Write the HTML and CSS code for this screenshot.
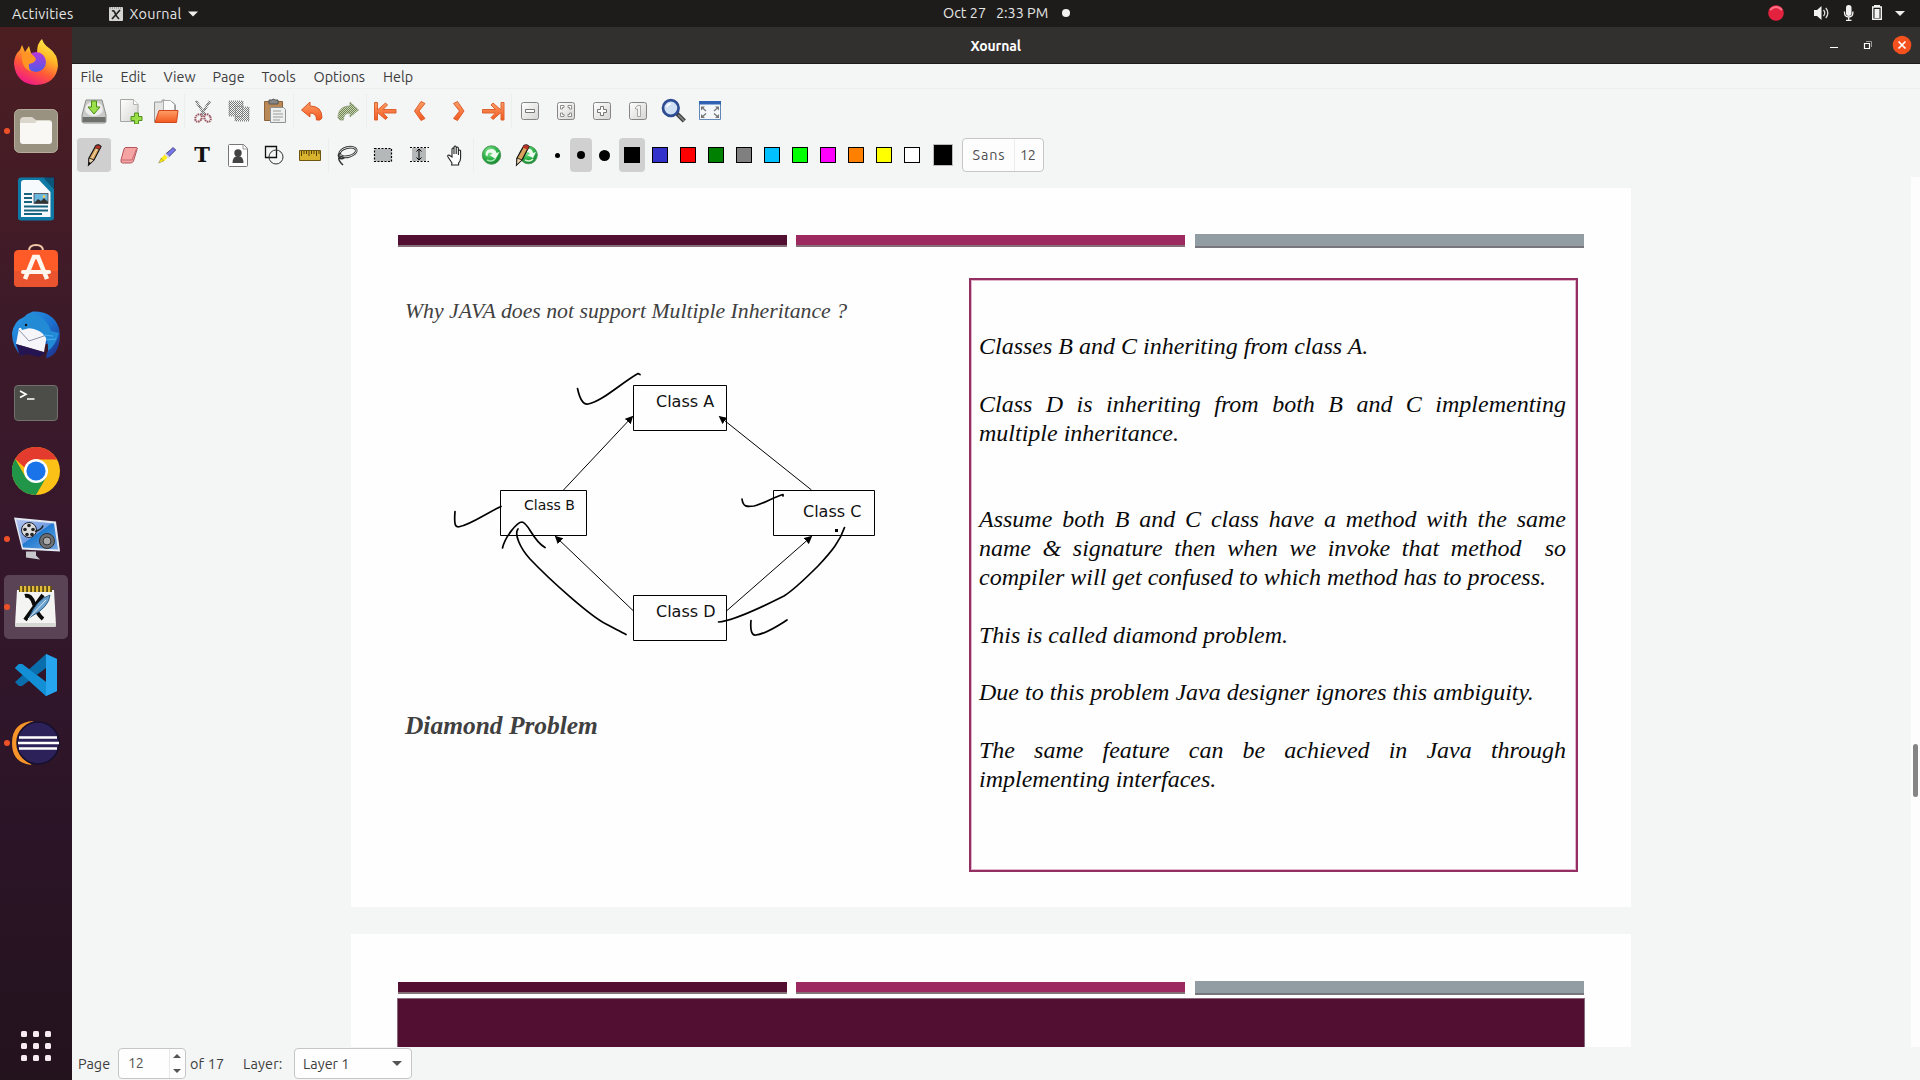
FILE: index.html
```html
<!DOCTYPE html>
<html lang="en">
<head>
<meta charset="utf-8">
<title>Xournal</title>
<link rel="stylesheet" href="styles.css">
</head>
<body>
<svg class="defs" width="0" height="0" aria-hidden="true">
  <defs>
    <linearGradient id="orange" x1="0" y1="0" x2="0" y2="1"><stop offset="0" stop-color="#ff9f68"/><stop offset="1" stop-color="#f2581f"/></linearGradient>
    <linearGradient id="paper" x1="0" y1="0" x2="1" y2="1"><stop offset="0" stop-color="#fff"/><stop offset="1" stop-color="#d4d4d2"/></linearGradient>
    <linearGradient id="fox" x1=".8" y1="0" x2=".3" y2="1"><stop offset="0" stop-color="#fff14d"/><stop offset=".35" stop-color="#ffb727"/><stop offset=".65" stop-color="#ff5a36"/><stop offset="1" stop-color="#f0168c"/></linearGradient>
    <linearGradient id="foxcore" x1="0" y1="0" x2="0" y2="1"><stop offset="0" stop-color="#b936d9"/><stop offset="1" stop-color="#4f5be8"/></linearGradient>
    <linearGradient id="bird" x1="0" y1="0" x2="1" y2="1"><stop offset="0" stop-color="#2b9fe8"/><stop offset=".55" stop-color="#1c6fce"/><stop offset="1" stop-color="#1d2a86"/></linearGradient>
    <linearGradient id="screen" x1="0" y1="0" x2="1" y2="1"><stop offset="0" stop-color="#b6c7f0"/><stop offset=".48" stop-color="#6f9be0"/><stop offset=".5" stop-color="#1f7bd0"/><stop offset="1" stop-color="#78a8e4"/></linearGradient>
    <radialGradient id="leaf" cx=".4" cy=".3" r=".8"><stop offset="0" stop-color="#8ee89a"/><stop offset=".5" stop-color="#2fb54a"/><stop offset="1" stop-color="#0a7a28"/></radialGradient>
    <pattern id="dither" width="2" height="2" patternUnits="userSpaceOnUse"><rect width="1" height="1" fill="#777"/><rect x="1" y="1" width="1" height="1" fill="#777"/></pattern>
    <pattern id="ditherGreen" width="2" height="2" patternUnits="userSpaceOnUse"><rect width="2" height="2" fill="#c9d6b4"/><rect width="1" height="1" fill="#708553"/><rect x="1" y="1" width="1" height="1" fill="#708553"/></pattern>
    <marker id="arrow" viewBox="0 0 8 8" refX="7" refY="4" markerWidth="8" markerHeight="8" markerUnits="userSpaceOnUse" orient="auto"><path d="M0 0L8 4L0 8z"/></marker>
  </defs>
</svg>

<header class="topbar">
  <div class="topbar-left">
    <span>Activities</span>
    <span class="app-menu">
      <svg width="14" height="14" viewBox="0 0 14 14"><rect width="14" height="14" rx="1" fill="#d4d4d2"/><path d="M1 1h12" stroke="#777" stroke-dasharray="1 1"/><path d="M3 4q2-1 3 2t4 6M11 3L3 12" stroke="#222" stroke-width="1.700" fill="none"/></svg>
      <span>Xournal</span>
      <svg width="10" height="6" viewBox="0 0 10 6"><path d="M0 .5h10L5 5.500z" fill="#eee"/></svg>
    </span>
  </div>
  <div class="topbar-clock"><span>Oct 27&nbsp;&nbsp; 2:33 PM</span><i class="dot"></i></div>
  <div class="topbar-right">
    <svg width="154" height="27" viewBox="1760 0 154 27">
      <circle cx="1776" cy="13" r="7.800" fill="#e2223f"/><path d="M1770 10q6-6 12 0" fill="none" stroke="#ff7185" stroke-width="2"/>
      <path d="M1814 10h3l4.500-4v14l-4.500-4h-3z" fill="#f2f2f2"/>
      <path d="M1823.500 10q2.500 3 0 6M1825.800 8q4 5 0 10" fill="none" stroke="#ddd" stroke-width="1.300"/>
      <rect x="1846" y="5" width="5.500" height="11" rx="2.700" fill="#f2f2f2"/><path d="M1844.500 11.500v1q0 4.500 4.200 4.500t4.200-4.500v-1M1848.700 17v3M1846 20.300h5.500" fill="none" stroke="#f2f2f2" stroke-width="1.300"/>
      <path d="M1872.700 7h8.600v12.300h-8.600z" fill="none" stroke="#f2f2f2" stroke-width="1.400"/><path d="M1874 5h6v2h-6zM1874.500 9h5v9h-5z" fill="#f2f2f2"/>
      <path d="M1895 11h10l-5 5z" fill="#eee"/>
    </svg>
  </div>
</header>

<div class="desktop">
  <nav class="dock">
    <div class="dock-item"><svg viewBox="0 1 48 48"><path d="M2 26Q2 17 8 12l2-5 3 7 4-6 2 7 6 0Q25 5 30 1q2 6 7 9 9 6 9 18 -2 18-22 19Q4 46 2 26z" fill="url(#fox)"/><circle cx="24" cy="24" r="10" fill="url(#foxcore)"/><path d="M10 14q10-1 14 7-1 4-7 5-1 5 3 8-9-3-10-12z" fill="#ff9524"/></svg></div>
    <div class="dock-item running"><svg viewBox="0 0 48 48"><rect x="2.500" y="2.500" width="43" height="43" rx="5" fill="#999280" stroke="#b4ad9c"/><path d="M8 14q0-4 4-4h8l4 3h13q3 0 3 3v6H8z" fill="#dcd7cc"/><path d="M8 16h15l2-2h12q3 0 3 3v17q0 3-3 3H11q-3 0-3-3z" fill="#f9f8f4"/></svg></div>
    <div class="dock-item"><svg viewBox="0 0 48 48"><path d="M9 2.500h23l9 0q1 0 1 1v39q0 3-3 3H9q-3 0-3-3v-37q0-3 3-3z" fill="#0e79a5"/><path d="M33 1.500h10v13z" fill="#35182c"/><path d="M12 5h15l11.500 12v25H9V8q0-3 3-3z" fill="#f7fafc"/><path d="M31 2.500h11v12z" fill="#0b5678"/><path d="M12 19h8M12 23h8M12 27h8M12 31.500h24M12 35.500h24M12 39h18" stroke="#17627f" stroke-width="1.800"/><rect x="22" y="18.500" width="14" height="10" fill="#69b7df" stroke="#333" stroke-width=".7"/><path d="M22 28l4-4 3 2 3-3 4 4v1.500z" fill="#333"/><circle cx="32" cy="21.500" r="1.300" fill="#ffd14a"/></svg></div>
    <div class="dock-item"><svg viewBox="0 1 48 48"><path d="M17 9q0-6 7-6t7 6" fill="none" stroke="#f2c7a6" stroke-width="2"/><rect x="2" y="8" width="44" height="37" rx="4.500" fill="#ff5b28"/><path d="M2 29h44v12q0 4-4 4H6q-4 0-4-4z" fill="#e9532d"/><path d="M13 37l9-22h4l9 22" fill="none" stroke="#fff6ee" stroke-width="4.500"/><path d="M11 30h26" stroke="#fff6ee" stroke-width="4" stroke-linecap="round"/></svg></div>
    <div class="dock-item"><svg viewBox="0 0 48 48"><path d="M0 22Q2 10 12 6q4-4 9-5.500Q41 0 47 17q3 14-4 25-5 5-9 5l1-5 5-9H8l2 12Q0 37 0 22z" fill="url(#bird)"/><path d="M7 17l17-1 11 8-3 17-28-8z" fill="#f5f5fa"/><path d="M7 19l10 11 18-6" fill="none" stroke="#8d93a5"/><path d="M9 17Q9 7 19 2q15 3 20 18l8 2q-3 12-11 18 1-15-9-20-8-4-13-2l-4 1z" fill="#238bd5"/><path d="M31 24l10 1M34 29l10-1" stroke="#4aaef0" fill="none"/><path d="M4 33l30 9-7 4-12-3-7 2z" fill="#241452"/><circle cx="14" cy="14" r="1.200" fill="#111"/></svg></div>
    <div class="dock-item"><svg viewBox="0 0 48 48"><rect x="2.500" y="6.500" width="43" height="35" rx="3.500" fill="#4c4c49" stroke="#70706c"/><path d="M8 12l6 3.300-6 3.300M15 20h7.500" fill="none" stroke="#fff" stroke-width="1.700"/></svg></div>
    <div class="dock-item"><svg viewBox="0 0 48 48"><circle cx="24" cy="24" r="24" fill="#fbc116"/><path d="M3.200 12A24 24 0 0 1 44.800 12H24L12 20z" fill="#e33b2e"/><path d="M3.200 12A24 24 0 0 0 24 48L34.400 30 24 36 13.600 30z" fill="#229648"/><path d="M24 12h20.800" stroke="#e33b2e"/><circle cx="24" cy="24" r="12" fill="#fff"/><circle cx="24" cy="24" r="9.600" fill="#1a73e8"/></svg></div>
    <div class="dock-item running"><svg viewBox="0 -1.500 48 48"><path d="M2 1l42 4 4 30-38-2z" fill="#e5eaf2"/><path d="M4 3l38 4 4 26-35-2z" fill="url(#screen)"/><path d="M14 35h10v4l4 4-14-2z" fill="#c8c8cc"/><circle cx="17" cy="13.500" r="7.500" fill="#ddd" stroke="#223"/><g fill="#222"><circle cx="17" cy="9" r="1.800"/><circle cx="13" cy="13" r="1.800"/><circle cx="21" cy="13" r="1.800"/><circle cx="15" cy="18" r="1.800"/><circle cx="20" cy="18" r="1.800"/></g><path d="M23 15q7-2 8-6" fill="none" stroke="#222" stroke-width="1.500"/><circle cx="35" cy="24.500" r="7.500" fill="#6c6f74" stroke="#333"/><circle cx="35" cy="24.500" r="4" fill="#aaa" stroke="#333"/></svg></div>
    <div class="dock-item running active"><svg viewBox="0 1 48 48"><path d="M5 8h37l2 35q0 2-2 2H5q-2 0-2-2z" fill="#f4f4f2"/><path d="M3 41h41v3q0 1-2 1H5q-2 0-2-1z" fill="#d6d6d3"/><rect x="7" y="4" width="33" height="6" fill="#5c4a15"/><path d="M8 7h32" stroke="#e2bd3d" stroke-width="6" stroke-dasharray="2.200 1.800"/><path d="M13 14q6-2 9 8t9 15M31 13L13 38" fill="none" stroke="#0c0c0c" stroke-width="4"/><path d="M17 36q8-19 21-23-1 12-18 21z" fill="#6da3cf" stroke="#2f5f8c"/><path d="M16 37L34 18" stroke="#dceaf5"/></svg></div>
    <div class="dock-item"><svg viewBox="0 0 48 48"><path d="M34 3l11 5v32l-11 5L3 17l4-4 3 0 24 18z" fill="#1587c9"/><path d="M34 3L3 31l4 4h3l24-18z" fill="#0a6dac"/><path d="M34 3l11 5v32l-11 5z" fill="#26a5ee"/><path d="M3 17l4-4h3l24 18v14z" fill="#138fd5"/></svg></div>
    <div class="dock-item running"><svg viewBox="0 0 48 48"><path d="M22 2Q0 3 0 24t21 22Q6 40 6 24T22 2z" fill="#f7942a"/><circle cx="26" cy="24" r="21" fill="#2c2158" stroke="#17102f" stroke-width="1.500"/><path d="M7 18.500h38M6 24h41M7 29.500h38" stroke="#fff" stroke-width="2.700"/></svg></div>
    <div class="apps-grid"><i></i><i></i><i></i><i></i><i></i><i></i><i></i><i></i><i></i></div>
  </nav>

  <main class="window">
    <div class="titlebar">
      <h1>Xournal</h1>
      <div class="window-buttons">
        <svg width="90" height="37" viewBox="1825 27 90 37"><path d="M1830 47.500h8" stroke="#fff"/><path d="M1864.500 43.500h5v5h-5z" fill="none" stroke="#fff" stroke-width="1.200"/><path d="M1866 41.500h5.500v5.500" fill="none" stroke="#999"/><circle cx="1902" cy="45" r="9.300" fill="#f4511e"/><path d="M1898.500 41.500l7 7m0-7l-7 7" stroke="#fff" stroke-width="1.700"/></svg>
      </div>
    </div>
    <div class="menubar"><span class="m-file">File</span><span class="m-edit">Edit</span><span class="m-view">View</span><span class="m-page">Page</span><span class="m-tools">Tools</span><span class="m-options">Options</span><span>Help</span></div>

    <div class="toolbar toolbar-main">
      <span class="tool"><svg viewBox="0 0 26 26"><path d="M5 2h16l4 15v6q0 2-2 2H3q-2 0-2-2v-6z" fill="#c9cac7" stroke="#8b8d88"/><path d="M1.500 19h23v5h-23z" fill="#6e706c"/><ellipse cx="13" cy="11" rx="9" ry="7" fill="#ededeb"/><path d="M10.500 3h5v6H19l-6 7-6-7h3.500z" fill="#9be04a" stroke="#4a8a15"/></svg></span>
      <span class="tool"><svg viewBox="0 0 26 26"><path d="M3.500 1.500h13l4.500 5v17h-17.500z" fill="url(#paper)" stroke="#a5a6a3"/><path d="M16.500 1.500v5H21" fill="#fff" stroke="#b5b5b3"/><path d="M17.500 15h4v3.500H25v4h-3.500V26h-4v-3.500H14v-4h3.500z" fill="#9ade47" stroke="#52901c"/></svg></span>
      <span class="tool"><svg viewBox="0 0 26 26"><path d="M1.500 4v20h21V7l-3-3h-5L12 2H9v2z" fill="#e4e4e2" stroke="#9a9a98"/><path d="M10.500 2.500h7l4 4V17h-11z" fill="#fafafa" stroke="#aaa"/><path d="M6 12.500h19l-1.500 12H2z" fill="url(#orange)" stroke="#d0461b"/></svg></span>
      <i class="sep"></i>
      <span class="tool"><svg viewBox="0 0 26 26"><path d="M6 3l9 14M20 3L11 17" stroke="url(#dither)" stroke-width="3"/><path d="M6 3l9 14M20 3L11 17" stroke="#777" stroke-width="1" stroke-dasharray="1 1"/><g fill="none" stroke="#9b5560" stroke-width="2" stroke-dasharray="1.500 .7"><ellipse cx="8.500" cy="20" rx="3" ry="4" transform="rotate(30 8.500 20)"/><ellipse cx="17.500" cy="20" rx="3" ry="4" transform="rotate(-30 17.500 20)"/></g></svg></span>
      <span class="tool"><svg viewBox="0 0 26 26"><path d="M3 3h14v15H3zM9 9h14v14H9z" fill="url(#dither)" stroke="#8a8a8a" stroke-dasharray="1 1"/></svg></span>
      <span class="tool"><svg viewBox="1 0 26 26"><path d="M3.500 3.500h18v19h-18z" fill="#b98a58" stroke="#8b6239"/><path d="M8 2h3q1-2 3 0h3v4H8z" fill="#888" stroke="#555"/><path d="M9.500 9.500h13l2 2v13h-15z" fill="#eef0f0" stroke="#8f9294"/><path d="M12 13h8M12 16h10M12 19h10M12 22h7" stroke="#999"/></svg></span>
      <i class="sep"></i>
      <span class="tool"><svg viewBox="0 0 26 26"><path d="M2.500 12l8.500-8v4q12 0 12 12l-2 2h-3.500q0-7-6.500-7v4z" fill="url(#orange)" stroke="#d95724"/></svg></span>
      <span class="tool"><svg viewBox="0 0 26 26"><path d="M23.500 12L15 4v4Q3 8 3 20l2 2h3.500q0-7 6.500-7v4z" fill="url(#ditherGreen)" stroke="#8d9c78" stroke-dasharray="1.500 .5"/></svg></span>
      <i class="sep"></i>
      <span class="tool"><svg viewBox="0 0 26 26"><path d="M2.500 4.500h3v7.500l8-7 2 2-4.500 4.500H24v3.500H11l4.500 4.500-2 2-8-7v7.500h-3z" fill="url(#orange)" stroke="#dd6230"/></svg></span>
      <span class="tool"><svg viewBox="0 0 26 26"><path d="M13 3.500l4 2-6 7.500 6 7.500-4 2L6.500 13z" fill="url(#orange)" stroke="#dd6230"/></svg></span>
      <span class="tool"><svg viewBox="-.5 0 26 26"><path d="M13 3.500l-4 2 6 7.500-6 7.500 4 2L19.500 13z" fill="url(#orange)" stroke="#dd6230"/></svg></span>
      <span class="tool"><svg viewBox="-.5 0 26 26"><path d="M23.500 4.500h-3v7.500l-8-7-2 2 4.500 4.500H2v3.500h13l-4.500 4.500 2 2 8-7v7.500h3z" fill="url(#orange)" stroke="#dd6230"/></svg></span>
      <i class="sep"></i>
      <span class="tool"><svg viewBox="0 0 26 26"><rect x="4.500" y="4.500" width="17" height="17" rx="2" fill="url(#paper)" stroke="#858585"/><path d="M8.500 11.500h9v3h-9z" fill="#fff" stroke="#777"/></svg></span>
      <span class="tool"><svg viewBox="0 0 26 26"><rect x="4.500" y="4.500" width="17" height="17" rx="2" fill="url(#paper)" stroke="#858585"/><path d="M7.500 11V7.500H11v2H9.500V11zM18.500 11V7.500H15v2h1.500V11zM7.500 15v3.500H11v-2H9.500V15zM18.500 15v3.500H15v-2h1.500V15z" fill="#fff" stroke="#777" stroke-width=".8"/></svg></span>
      <span class="tool"><svg viewBox="0 0 26 26"><rect x="4.500" y="4.500" width="17" height="17" rx="2" fill="url(#paper)" stroke="#858585"/><path d="M11.500 8.500h3v3h3v3h-3v3h-3v-3h-3v-3h3z" fill="#fff" stroke="#777"/></svg></span>
      <span class="tool"><svg viewBox="0 0 26 26"><rect x="4.500" y="4.500" width="17" height="17" rx="2" fill="url(#paper)" stroke="#858585"/><path d="M10.500 9.500l2.500-2h2.500v11h-3v-7.500h-2z" fill="#f4f4f4" stroke="#a0a0a0" stroke-width=".9"/></svg></span>
      <span class="tool"><svg viewBox=".7 0 26 26"><path d="M16 15l8 8" stroke="#444" stroke-width="4.500"/><path d="M18 17l6 6" stroke="#888" stroke-width="1.500"/><circle cx="10.500" cy="10" r="7.800" fill="#cfe0f5" stroke="#2e4c92" stroke-width="2.700"/><path d="M6.500 9q1-3 4-3" stroke="#fff" stroke-width="1.500" fill="none"/></svg></span>
      <span class="tool"><svg viewBox="0 0 26 26"><path d="M2.500 3.500h21v18h-21z" fill="#f3f6fa" stroke="#6387b8"/><path d="M2 3h22v3.500H2z" fill="#2f62b0"/><path d="M4 8.500h4L4 12.500zM22 8.500h-4l4 4zM4 20h4l-4-4zM22 20h-4l4-4z" fill="#777"/><path d="M5 9.500l4 3.500M21 9.500l-4 3.500M5 19l4-3.500M21 19l-4-3.500" stroke="#777" stroke-width="1.300"/></svg></span>
    </div>

    <div class="toolbar toolbar-pen">
      <span class="tool selected"><svg viewBox="0 0 26 26"><path d="M8 16L15 3.500q3-1.500 5 1L13 18l-5.500 5z" fill="#d9a35e" stroke="#111" stroke-width="1.200"/><path d="M15 3.500q3-1.500 5 1l-1.500 3-5-2z" fill="#b83228" stroke="#222" stroke-width=".7"/><path d="M8 16l5 2-5.500 5z" fill="#efd9b4" stroke="#111" stroke-width=".8"/><path d="M7.500 23l.5-3 2 1z"/><path d="M16 7l-5 9" stroke="#f8e4bc"/></svg></span>
      <span class="tool"><svg viewBox="1 0 26 26"><path d="M10 5.500h10q2 0 1 2L17.500 19q-1 2-3 2H6.500q-2 0-1.500-3L8 7q.5-1.500 2-1.500z" fill="#f5a3a3" stroke="#b3565c"/><path d="M5 18h11l4.500-11" fill="none" stroke="#c46b70"/></svg></span>
      <span class="tool"><svg viewBox="-.7 0 26 26"><path d="M12 12l7.500-6.500 2.500 2.500-7 7z" fill="#7778ea" stroke="#33336a" stroke-width=".8"/><path d="M7.500 16l4-4 3 3-4.500 4.500z" fill="#ffef18"/><path d="M10.500 12.500l1.500-1.500 4 4-1.500 1.500z" fill="#ddd"/><path d="M7.500 16L5 21l5-2z" fill="#ffeb00" stroke="#776" stroke-width=".5"/></svg></span>
      <span class="tool text-tool">T</span>
      <span class="tool"><svg viewBox="0 0 26 26"><path d="M4.500 2.500h14l4 4v17q0 1-1 1h-17q-1 0-1-1v-20q0-1 1-1z" fill="#fff" stroke="#777"/><path d="M18 2.500v4.500h4.500" fill="none" stroke="#999"/><circle cx="13" cy="11" r="3.700" fill="#444"/><path d="M7.500 21q0-7 5.500-7t5.500 7z" fill="#444"/></svg></span>
      <span class="tool"><svg viewBox="0 0 26 26"><path d="M4.500 4.500h11v11h-11z" fill="none" stroke="#111" stroke-width="1.300"/><circle cx="15" cy="15" r="7" fill="none" stroke="#333"/></svg></span>
      <span class="tool"><svg viewBox="0 0 26 26"><path d="M2.500 8.500h21v10h-21z" fill="#d9b32e" stroke="#705710"/><path d="M4.500 9v5M7 9v3M9.500 9v3M12 9v5M14.500 9v3M17 9v3M19.500 9v5M22 9v3" stroke="#54400b"/></svg></span>
      <i class="sep"></i>
      <span class="tool"><svg viewBox="0 0 26 26"><ellipse cx="14" cy="10" rx="8.500" ry="4.500" transform="rotate(-14 14 10)" fill="none" stroke="#333" stroke-width="2.600"/><ellipse cx="14" cy="10" rx="8.500" ry="4.500" transform="rotate(-14 14 10)" fill="none" stroke="#ddd" stroke-width=".9"/><path d="M7 11q-4 1-2 4t5 1q-1-2-4-1t1 6l2 2" fill="none" stroke="#333" stroke-width="1.500"/></svg></span>
      <span class="tool"><svg viewBox="0 0 26 26"><path d="M4.500 6.500h17v13h-17z" fill="#b4b8b8" stroke="#000" stroke-width="1.200" stroke-dasharray="2 1.500"/></svg></span>
      <span class="tool"><svg viewBox="0 0 26 26"><path d="M6 6h14v13H6z" fill="#b4b8b8"/><path d="M4 5.500h19M4 19.500h19" stroke="#000" stroke-dasharray="2 1.500"/><path d="M13 7v11M10.500 9.500L13 7l2.500 2.500M10.500 15.500L13 18l2.500-2.500" fill="none" stroke="#000"/></svg></span>
      <span class="tool"><svg viewBox="0 0 26 26"><path d="M10 21l-4-6q-1-2 1-2l3 2V7q1-2 2 0v5-7q1-2 2.200 0v7-6q1-2 2.200 0v7-4q1.500-2 2.200 0v7q0 3-2 5v2h-7z" fill="#fff" stroke="#222" stroke-width="1.100"/></svg></span>
      <i class="sep"></i>
      <span class="tool"><svg viewBox="0 0 26 26"><circle cx="12.500" cy="13" r="9.200" fill="url(#leaf)" stroke="#4f9b5d"/><path d="M6.500 13q0-6 6-6 4 0 5 4l3-1-4 7-6-4 3-1q-1-2-3-1.500-2 .5-2 4z" fill="#eefbee"/><path d="M8 18q5 2.500 8-1" fill="none" stroke="#a5e4ad" stroke-width="1.500"/></svg></span>
      <span class="tool"><svg viewBox="1 0 26 26"><circle cx="14.500" cy="13" r="8.800" fill="url(#leaf)" stroke="#4f9b5d"/><path d="M13 7q5-1 6 4l3-1-3 6-6-3 3-1q-1-2-3-2z" fill="#eefbee"/><path d="M11 18q5 2.500 8-1" fill="none" stroke="#d9f2cf" stroke-width="1.500"/><path d="M3 16L10 3.500q3-1.500 5 1L8 18l-5.500 5z" fill="#d9a35e" stroke="#111" stroke-width="1.200"/><path d="M10 3.500q3-1.500 5 1l-1.500 3-5-2z" fill="#b83228"/><path d="M3 16l5 2-5.500 5z" fill="#efd9b4" stroke="#111" stroke-width=".8"/></svg></span>
      <span class="nib fine"><i></i></span><span class="nib medium selected"><i></i></span><span class="nib thick"><i></i></span>
      <i class="sep wide"></i>
      <span class="swatch selected black"><i></i></span><span class="swatch blue"><i></i></span><span class="swatch red"><i></i></span><span class="swatch green"><i></i></span><span class="swatch gray"><i></i></span><span class="swatch cyan"><i></i></span><span class="swatch lime"><i></i></span><span class="swatch magenta"><i></i></span><span class="swatch orange"><i></i></span><span class="swatch yellow"><i></i></span><span class="swatch white"><i></i></span>
      <span class="current-color"></span>
      <span class="font-button"><span class="font-name">Sans</span><span class="font-size">12</span></span>
    </div>

    <div class="viewport">
      <div class="pages">
        <article class="page page-current">
          <div class="bars"><i class="bar plum"></i><i class="bar rose"></i><i class="bar steel"></i></div>
          <div class="slide">
            <section class="slide-left">
              <h2>Why JAVA does not support Multiple Inheritance ?</h2>
              <svg class="diagram" width="470" height="300" viewBox="430 360 470 300">
                <g fill="none" stroke="#000"><path d="M633.500 385.500h93v45h-93zM500.500 490.500h86v45h-86zM773.500 490.500h101v45h-101zM633.500 595.500h93v45h-93z"/></g>
                <g stroke="#000" stroke-width="1"><path d="M563.500 490L632.500 416.500" marker-end="url(#arrow)"/><path d="M811.500 490L719.500 416.500" marker-end="url(#arrow)"/><path d="M633 610.500L555.500 536.500" marker-end="url(#arrow)"/><path d="M727 610.500L811.500 536.500" marker-end="url(#arrow)"/></g>
                <g class="labels"><text x="656" y="407">Class A</text><text class="small" x="524" y="510">Class B</text><text x="803" y="517">Class C</text><text x="656" y="617">Class D</text></g>
                <g class="ink"><path d="M577.500 388.500C580 400 583 405 588 404C601 402 620 384 638 373.500L640 374.500"/><path d="M455 511.500C454 525 455 528 460 526.500C470 525 485 514 501 506.500"/><path d="M502.500 548C505 537 517 522 522 522C529 523 532 540 545 547.500"/><path d="M518 529C514 534 520 548 530 559C550 580 590 616 606 624C613 628 620 631 626 634.500"/><path d="M742 499C743 507 747 507 754 506C763 504 774 497 783 494.500V496"/><path d="M718.500 622C735 621 770 603 784 596C792 591 802 582 818 566C832 551 840 541 844.500 527.500"/><path d="M751 620.500C750 631 752 636 756 635C766 634 779 625 787 620"/></g>
                <path d="M835 529h3v3h-3z"/>
              </svg>
              <h3>Diamond Problem</h3>
            </section>
            <section class="notes">
              <p>Classes B and C inheriting from class A.</p>
              <p>Class D is inheriting from both B and C implementing multiple inheritance.</p>
              <p class="spaced">Assume both B and C class have a method with the same name &amp; signature then when we invoke that method &nbsp;so compiler will get confused to which method has to process.</p>
              <p>This is called diamond problem.</p>
              <p>Due to this problem Java designer ignores this ambiguity.</p>
              <p>The same feature can be achieved in Java through implementing interfaces.</p>
            </section>
          </div>
        </article>
        <article class="page page-next">
          <div class="bars"><i class="bar plum"></i><i class="bar rose"></i><i class="bar steel"></i></div>
          <div class="panel"></div>
        </article>
      </div>
      <div class="scrollbar"><i></i></div>
    </div>

    <footer class="statusbar">
      <span class="page-label">Page</span>
      <span class="spin"><span class="spin-value">12</span><span class="spin-buttons"><svg width="8" height="4" viewBox="0 0 8 4"><path d="M0 4h8L4 0z" fill="#555"/></svg><svg width="8" height="4" viewBox="0 0 8 4"><path d="M0 0h8L4 4z" fill="#555"/></svg></span></span>
      <span class="page-total">of 17</span>
      <span class="layer-label">Layer:</span>
      <span class="combo"><span>Layer 1</span><svg width="10" height="5" viewBox="0 0 10 5"><path d="M0 0h10L5 5z" fill="#555"/></svg></span>
    </footer>
  </main>
</div>
</body>
</html>
```
FILE: styles.css
```css
* { box-sizing: border-box; }
body {
  margin: 0;
  width: 1920px;
  height: 1080px;
  overflow: hidden;
  display: flex;
  flex-direction: column;
  font: 14.4px/20px Ubuntu, "Noto Sans", sans-serif;
  color: #3d3d3d;
  background: #f4f5f5;
}
svg { display: block; flex: none; }
.defs { position: absolute; }

/* Top panel */
.topbar {
  height: 27px;
  flex: none;
  display: grid;
  grid-template-columns: 943px 200px 1fr;
  align-items: center;
  background: #1d1c1b;
  color: #e6e6e4;
}
.topbar-left { display: flex; padding-left: 12px; gap: 35px; letter-spacing: .25px; }
.app-menu { display: flex; align-items: center; gap: 7px; }
.topbar-clock { display: flex; align-items: center; gap: 14px; white-space: nowrap; padding-bottom: 1px; }
.dot { width: 8px; height: 8px; border-radius: 50%; background: #f2f2f2; }
.topbar-right { display: flex; justify-content: flex-end; padding-right: 6px; }

.desktop { flex: 1; display: flex; min-height: 0; }

/* Dock */
.dock {
  width: 72px;
  flex: none;
  display: flex;
  flex-direction: column;
  align-items: center;
  gap: 4px;
  padding: 4px 0 19px;
  background: linear-gradient(#4c1e22, #3d1a29 28%, #35172c 50%, #2a1426 80%, #23131d);
}
.dock-item { position: relative; width: 64px; height: 64px; padding: 8px; flex: none; border-radius: 5px; }
.dock-item svg { width: 48px; height: 48px; }
.dock-item.active { background: #594354; }
.dock-item.running::before { content: ""; position: absolute; left: 0; top: 29px; width: 6px; height: 6px; border-radius: 50%; background: #ee5128; }
.apps-grid { margin-top: auto; display: grid; grid-template-columns: repeat(3, 6px); gap: 6px; }
.apps-grid i { width: 6px; height: 6px; border-radius: 1.5px; background: #f8eaf1; }

/* Window */
.window { flex: 1; min-width: 0; display: flex; flex-direction: column; background: #f4f5f5; }
.titlebar {
  height: 37px;
  flex: none;
  display: grid;
  grid-template-columns: 896px 1fr;
  align-items: center;
  background: #32302f;
  border-bottom: 1px solid #1e1d1c;
  color: #fff;
}
.titlebar h1 { margin: 0; width: 949px; font-size: 14px; line-height: 20px; text-align: right; letter-spacing: -.1px; }
.window-buttons { display: flex; justify-content: flex-end; padding-right: 5px; }
.menubar { height: 25px; flex: none; display: flex; align-items: center; padding: 1px 0 0 7.500px; border-bottom: 1px solid #eceeee; }
.menubar span { padding-left: 1px; }
.m-file { width: 40px; }
.m-edit { width: 43px; }
.m-view, .m-page { width: 49px; }
.m-tools { width: 52px; }
.m-options { width: 69.500px; }

/* Toolbars */
.toolbar { height: 44px; flex: none; display: flex; align-items: center; padding-left: 4px; }
.tool { width: 36px; height: 34px; flex: none; display: flex; align-items: center; justify-content: center; }
.tool svg { width: 26px; height: 26px; }
.tool.selected { background: #cfcfcf; border-radius: 4px; box-shadow: inset 1px 0 #f4f5f5, inset -1px 0 #f4f5f5; }
.text-tool { font: bold 21px/34px "DejaVu Serif", serif; color: #111; }
.sep { width: 1px; height: 34px; background: #eceeee; flex: none; }
.sep.wide { width: 3px; background: none; }
.nib { width: 23px; height: 34px; flex: none; display: flex; align-items: center; justify-content: center; border-radius: 4px; }
.nib i { border-radius: 50%; background: #000; }
.nib.selected { background: #d0d0d0; width: 22px; margin: 0 .5px; }
.fine i { width: 5px; height: 5px; }
.medium i { width: 8px; height: 8px; }
.thick i { width: 11px; height: 11px; margin-left: 1px; }
.swatch { width: 26px; height: 34px; margin: 0 1px; flex: none; display: flex; align-items: center; justify-content: center; border-radius: 4px; }
.swatch.selected { background: #d0d0d0; }
.swatch i { width: 16px; height: 16px; border: 1px solid #000; }
.black i { background: #000; }
.blue i { background: #3333cc; }
.red i { background: #f00; }
.green i { background: #008000; }
.gray i { background: #808080; }
.cyan i { background: #00c0ff; }
.lime i { background: #0f0; }
.magenta i { background: #f0f; }
.orange i { background: #ff8000; }
.yellow i { background: #ff0; }
.white i { background: #fff; }
.current-color { width: 20px; height: 22px; margin: 0 9px 0 7px; background: #000; border: 1px solid #bbb; }
.font-button { width: 82px; height: 34px; display: flex; align-items: stretch; line-height: 32px; border: 1px solid #c6c6c6; border-radius: 4px; background: #fdfdfd; color: #505050; }
.font-name { width: 52px; padding-left: 9.500px; border-right: 1px solid #ececec; letter-spacing: .9px; }
.font-size { padding-left: 5px; letter-spacing: -.4px; }

/* Document */
.viewport { flex: 1; min-height: 0; display: flex; overflow: hidden; }
.pages { flex: 1; padding: 11px 0 0 279px; display: flex; flex-direction: column; gap: 27px; }
.page { width: 1280px; background: #fefefe; flex: none; }
.page-current { height: 719px; }
.page-next { height: 714px; }
.bars { display: grid; grid-template-columns: 389px 389px 389px; column-gap: 9.500px; padding: 47px 0 0 46.500px; }
.bar { height: 12px; border-bottom: 2px solid #857078; }
.plum { background: #530f32; }
.rose { background: #9c2a60; }
.steel { background: #929da3; border-color: #77767c; margin-top: -1px; height: 14px; margin-bottom: -1px; }
.page-next .bars { padding-top: 48px; }
.panel { width: 1188px; height: 400px; margin: 4px 0 0 46px; background: #530f32; border: 1px solid #88687a; }

.slide { display: flex; padding-left: 54px; font-family: "Liberation Serif", serif; font-style: italic; }
.slide-left { width: 564px; padding-top: 51px; color: #404040; }
.slide h2 { margin: 0; font-size: 21.750px; line-height: 26px; font-weight: 400; white-space: nowrap; }
.diagram { margin: 36px 0 0 25px; }
.labels { font: 16px "DejaVu Sans", sans-serif; fill: #111; }
.labels .small { font-size: 14px; }
.ink { fill: none; stroke: #000; stroke-width: 1.700px; stroke-linecap: round; stroke-linejoin: round; }
.slide h3 { margin: 51px 0 0; font-size: 25.450px; line-height: 30px; }
.notes { width: 609px; height: 594px; margin-top: 31px; padding: 52.300px 10px 0 8px; border: 2px solid #932f62; box-shadow: inset 0 0 0 1px #e2b5cb; color: #0a0a0a; font-size: 24px; line-height: 28.850px; text-align: justify; }
.notes p { margin: 0 0 28.850px; }
.notes p.spaced { margin-top: 57.600px; }

.scrollbar { width: 9px; flex: none; background: #fdfdfd; padding: 567px 0 0 2px; }
.scrollbar i { display: block; width: 5px; height: 53px; border-radius: 3px; background: #858585; }

/* Status bar */
.statusbar { height: 33px; flex: none; display: flex; align-items: center; padding-left: 6px; }
.page-label { width: 40px; }
.spin { width: 68px; height: 31px; display: flex; border: 1px solid #c6c6c6; border-radius: 4px; background: #fefefe; color: #555; }
.spin-value { width: 51px; padding-left: 9px; line-height: 29px; border-right: 1px solid #e9e9e9; letter-spacing: -.3px; }
.spin-buttons { flex: 1; display: flex; flex-direction: column; justify-content: space-between; align-items: center; padding: 5px 1px 5px 0; }
.page-total { margin-left: 4px; width: 53px; letter-spacing: .2px; }
.layer-label { width: 51px; letter-spacing: .15px; }
.combo { width: 118px; height: 31px; display: flex; align-items: center; justify-content: space-between; padding: 0 9px 0 8px; border: 1px solid #c6c6c6; border-radius: 4px; background: #fefefe; }
```
